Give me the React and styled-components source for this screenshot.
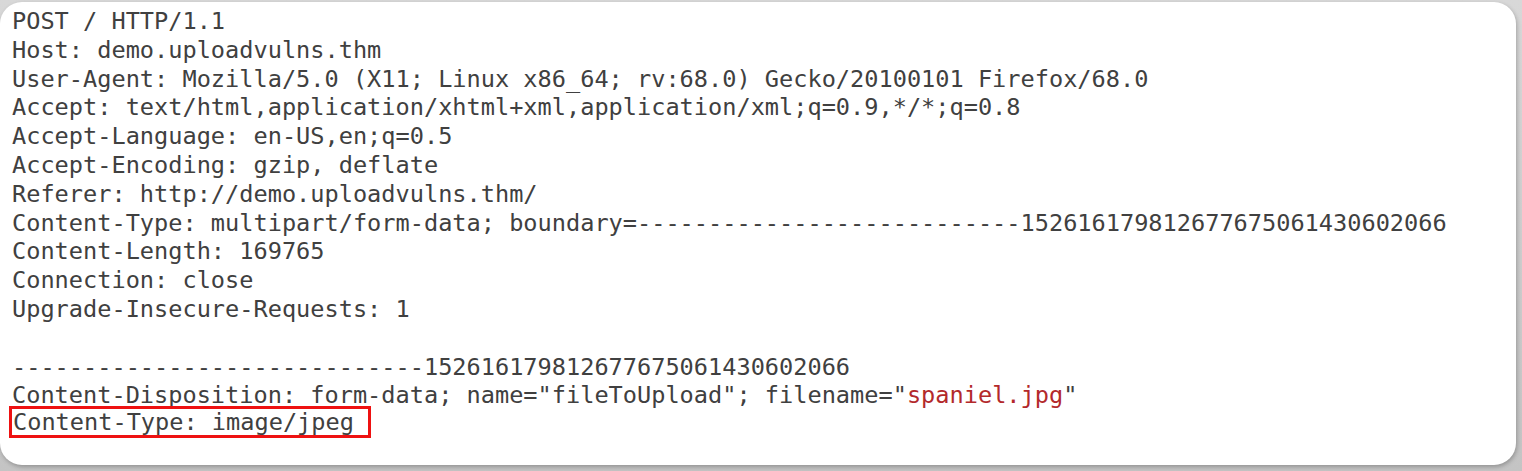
import styled, { createGlobalStyle } from 'styled-components';

const GlobalStyle = createGlobalStyle`
	html, body {
		margin: 0;
		padding: 0;
		background: #cfcfcf;
	}
`;

const lines = [
	'POST / HTTP/1.1',
	'Host: demo.uploadvulns.thm',
	'User-Agent: Mozilla/5.0 (X11; Linux x86_64; rv:68.0) Gecko/20100101 Firefox/68.0',
	'Accept: text/html,application/xhtml+xml,application/xml;q=0.9,*/*;q=0.8',
	'Accept-Language: en-US,en;q=0.5',
	'Accept-Encoding: gzip, deflate',
	'Referer: http://demo.uploadvulns.thm/',
	'Content-Type: multipart/form-data; boundary=---------------------------152616179812677675061430602066',
	'Content-Length: 169765',
	'Connection: close',
	'Upgrade-Insecure-Requests: 1',
	'',
	'-----------------------------152616179812677675061430602066',
];

// request view
const App = () => {
	return (
		<Page>
			<GlobalStyle />
			<Card>
				<Request>
					{lines.map((line, i) => (
						<Line key={i}>{line}</Line>
					))}
					<Line>
						Content-Disposition: form-data; name="fileToUpload"; filename="
						<FileName>spaniel.jpg</FileName>"
					</Line>
					<Line $tight>
						<Highlight>Content-Type: image/jpeg</Highlight>
					</Line>
				</Request>
			</Card>
		</Page>
	);
};

// css
const Page = styled.div`
	width: 1522px;
	height: 471px;
	padding: 2px 6px 6px 0;
	box-sizing: border-box;
	background: linear-gradient(180deg, #d8d8d8 0%, #c4c4c4 100%);
`;

const Card = styled.div`
	height: 100%;
	background: #fff;
	border-radius: 22px;
	box-shadow: 1px 2px 4px rgba(0, 0, 0, 0.25);
	padding: 5px 0 0 12px;
	box-sizing: border-box;
`;

const Request = styled.div`
	font-family: 'DejaVu Sans Mono', monospace;
	font-size: 23.6px;
	line-height: 28.8px;
	color: #404040;
	white-space: pre;
`;

const Line = styled.div`
	height: 28.8px;
	margin-top: ${(p) => (p.$tight ? '-4px' : '0')};
`;

const FileName = styled.span`
	color: #b3292b;
`;

const Highlight = styled.span`
	display: inline-block;
	margin-left: -3px;
	padding: 0 14px 0 1px;
	line-height: 26px;
	border: 3px solid #ee1111;
`;

export default App;
